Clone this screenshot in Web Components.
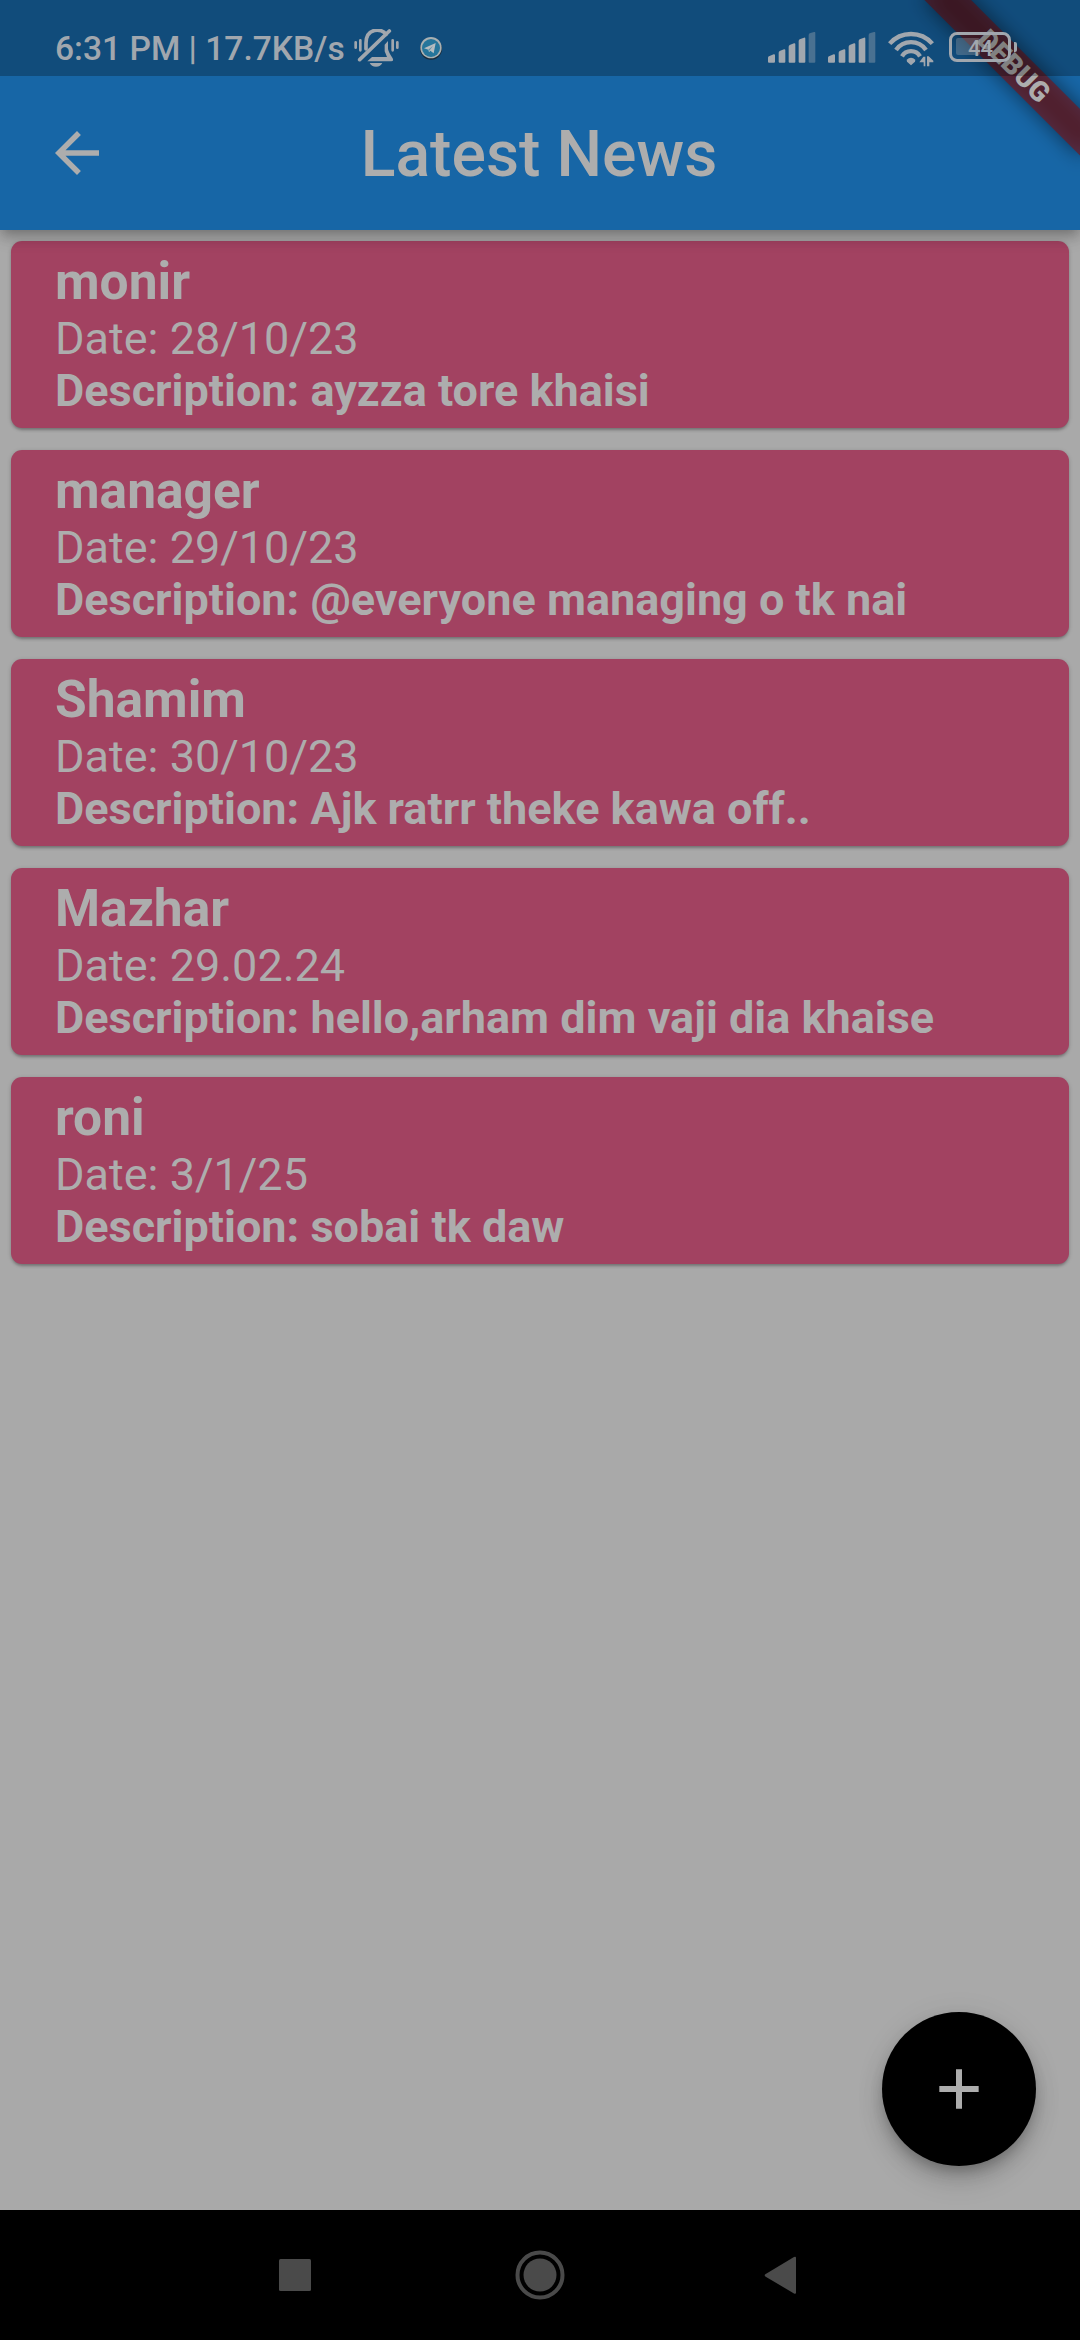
<!DOCTYPE html>
<html lang="en">
<head>
<meta charset="utf-8">
<title>Latest News</title>
<style>
  html, body { margin: 0; height: 100%; background: #a9a9a9; }
  body { font-family: Roboto, "Liberation Sans", sans-serif; color: #adadad; overflow: hidden; }
</style>
</head>
<body>
<news-screen></news-screen>
<script>
class Base extends HTMLElement {
  constructor() {
    super();
    this.attachShadow({ mode: "open" }).innerHTML = this.view();
  }
}

customElements.define("signal-bars", class extends Base {
  view() {
    return `<style>:host{display:block;width:48px;height:32px}svg{display:block}</style>
    <svg width="48" height="32" viewBox="0 0 144 96" fill="#a1a7ae">
      <path d="M0 89V77Q0 74 3 73L17 67Q21 66 21 70V89Q21 92 18 92H3Q0 92 0 89Z"/>
      <path d="M32 89V62Q32 59 35 57L48 52Q52 51 52 55V89Q52 92 49 92H35Q32 92 32 89Z"/>
      <path d="M62 89V44Q62 41 65 39L78 34Q82 33 82 37V89Q82 92 79 92H65Q62 92 62 89Z"/>
      <path d="M92 89V27Q92 24 95 22L108 17Q112 16 112 20V89Q112 92 109 92H95Q92 92 92 89Z"/>
      <path fill="#4a7191" d="M122 89V9Q122 6 125 4L138 0Q142 -1 142 3V89Q142 92 139 92H125Q122 92 122 89Z"/>
    </svg>`;
  }
});

customElements.define("wifi-icon", class extends Base {
  view() {
    return `<style>:host{display:block;width:46px;height:36px}svg{display:block}</style>
    <svg width="46" height="36" viewBox="0 0 138 108" fill="none" stroke="#a1a7ae" stroke-width="13">
      <path d="M5 38A85 85 0 0 1 133 38"/>
      <path d="M24 57A55 55 0 0 1 114 57"/>
      <path d="M42 76A31 31 0 0 1 96 76"/>
      <path fill="#a1a7ae" stroke="none" d="M56 86Q69 75 82 86L81 92L69 103L57 92Z"/>
      <path fill="#a1a7ae" stroke="none" d="M94 94L106 77H112V106H107V94ZM117 106V76H122L136 89V94H124V106Z"/>
    </svg>`;
  }
});

customElements.define("battery-icon", class extends Base {
  view() {
    return `<style>
      :host{display:flex;align-items:center;width:68px;height:30px}
      .body{box-sizing:border-box;width:62px;height:30px;border:3px solid #a1a7ae;border-radius:8px;padding:3px 4px;display:flex;font:500 22px/24px Roboto,sans-serif;color:#a1a7ae}
      .level{width:24px;height:17px;background:#a1a7ae55;border-radius:2px}
      .num{margin:-1px 0 0 -12px;width:26px;line-height:23px}
      .tip{width:2.5px;height:10px;margin-left:3px;background:#a1a7ae;border-radius:0 2px 2px 0}
    </style><div class="body"><div class="level"></div><div class="num">44</div></div><div class="tip"></div>`;
  }
});

customElements.define("bell-off-icon", class extends Base {
  view() {
    return `<style>:host{display:block;width:45px;height:38px}svg{display:block}</style>
    <svg width="45" height="38" viewBox="0 0 135 114" fill="none" stroke="#a1a7ae" stroke-width="11" stroke-linecap="round" stroke-linejoin="round">
      <path stroke-width="8" d="M5 40V56M19 34V64M116 34V64M130 40V56"/>
      <path d="M36 60V42C36 -4 84 -4 96 16"/>
      <path d="M106 6L17 92"/>
      <path stroke="none" fill="#a1a7ae" d="M40 97L54 84H99L92 67V47L102 36V60Q104 70 116 88Q120 97 112 97ZM47 102H85Q80 113 66 113T47 102Z"/>
    </svg>`;
  }
});

customElements.define("telegram-icon", class extends Base {
  view() {
    return `<style>:host{display:block;width:24px;height:24px}svg{display:block}</style>
    <svg width="24" height="24" viewBox="0 0 72 72">
      <circle cx="36" cy="38" r="33" fill="#182a38"/><circle cx="36" cy="35" r="32" fill="#a9b0b2"/>
      <circle cx="36" cy="36" r="27" fill="#25759b"/>
      <path fill="#b4bcc0" d="M15 37L50 21L44 52L34 44L30 49L28 41Z"/><path d="M28 41L42 29L31 44Z" fill="#5c8ea6"/>
    </svg>`;
  }
});

customElements.define("status-bar", class extends Base {
  view() {
    return `<style>
      :host{box-sizing:border-box;display:flex;align-items:flex-start;height:76px;padding:0 63px 0 55px;background:rgba(0,0,0,.255);color:#a1a7ae}
      .time{font:500 33.6px/40px Roboto,sans-serif;white-space:pre;padding-top:29px;width:299px}
      bell-off-icon{margin-top:29px}
      telegram-icon{margin:36px 0 0 20px}
      .right{display:flex;margin-left:auto}
      signal-bars{margin:32px 12px 0 0}
      wifi-icon{margin:31px 15px 0 0}
      battery-icon{margin-top:32px}
    </style>
    <span class="time">6:31 PM | 17.7KB/s</span><bell-off-icon></bell-off-icon><telegram-icon></telegram-icon>
    <div class="right"><signal-bars></signal-bars><signal-bars></signal-bars><wifi-icon></wifi-icon><battery-icon></battery-icon></div>`;
  }
});

customElements.define("title-bar", class extends Base {
  view() {
    return `<style>
      :host{box-sizing:border-box;display:grid;grid-template-columns:66px 1fr 66px;align-items:center;height:154px;padding:0 44px}
      svg{display:block}
      h1{margin:0;padding:2px 2px 0 0;text-align:center;font:500 64.3px/76px Roboto,sans-serif;color:#adadad}
    </style>
    <svg width="66" height="66" viewBox="0 0 24 24" fill="#adadad"><path d="M20 11H7.83l5.59-5.59L12 4l-8 8 8 8 1.41-1.41L7.83 13H20z"/></svg>
    <h1><slot></slot></h1>`;
  }
});

customElements.define("debug-banner", class extends Base {
  view() {
    return `<style>
      :host{position:absolute;top:0;right:0;width:220px;height:220px;overflow:hidden;pointer-events:none}
      .turn{position:absolute;left:220px;top:0;width:0;height:0;transform:rotate(45deg)}
      .shade,.band{position:absolute;left:-110px;top:77px;width:220px;height:33px}
      .shade{background:rgba(0,0,0,.5);filter:blur(10px)}
      .band{background:rgba(121,19,22,.63);font:900 28px/33px Roboto,sans-serif;text-align:center;color:#adadad}
    </style><div class="turn"><div class="shade"></div><div class="band">DEBUG</div></div>`;
  }
});

customElements.define("news-card", class extends Base {
  view() {
    return `<style>
      :host{box-sizing:border-box;display:flex;flex-direction:column;height:187px;padding:10px 44px;border-radius:11px;background:#a24261;box-shadow:0 3px 3px -1px rgba(0,0,0,.22),0 1px 4px rgba(0,0,0,.18);color:#adadad;white-space:nowrap}
      .name{font-weight:700;font-size:51.5px;line-height:61px}
      .date{font-size:45px;line-height:53px}
      .desc{font-weight:700;font-size:45px;line-height:52px}
    </style>
    <div class="name"><slot name="name"></slot></div>
    <div class="date">Date: <slot name="date"></slot></div>
    <div class="desc">Description: <slot></slot></div>`;
  }
});

customElements.define("add-button", class extends Base {
  view() {
    return `<style>
      :host{position:absolute;right:44px;bottom:44px;width:154px;height:154px;border-radius:50%;background:#000;display:grid;place-items:center;box-shadow:0 8px 14px -3px rgba(0,0,0,.25),0 16px 27px rgba(0,0,0,.13),0 3px 30px rgba(0,0,0,.08)}
    </style><svg width="40" height="40" viewBox="0 0 120 120" stroke="#adadad" stroke-width="18"><path d="M60 1V119M1 60H119"/></svg>`;
  }
});

customElements.define("nav-bar", class extends Base {
  view() {
    return `<style>
      :host{display:flex;height:130px;background:#000;align-items:center;justify-content:center;gap:195px}
      svg{display:block}
    </style>
    <svg width="50" height="50" viewBox="0 0 50 50" fill="#4a4a4a"><rect x="9" y="9" width="32" height="32" rx="1.5"/></svg>
    <svg width="50" height="50" viewBox="0 0 50 50" fill="#4a4a4a"><circle cx="25" cy="25" r="16.5"/><circle cx="25" cy="25" r="22.5" fill="none" stroke="#4a4a4a" stroke-width="4"/></svg>
    <svg width="50" height="50" viewBox="0 0 50 50" fill="#4a4a4a"><path d="M5.3 24.2L34 7Q36 6 36 8V42.500Q36 44.500 34 43.500L5.300 26.400Q4 25.300 5.300 24.200Z"/></svg>`;
  }
});

customElements.define("news-screen", class extends Base {
  view() {
    const news = [
      ["monir", "28/10/23", "ayzza tore khaisi"],
      ["manager", "29/10/23", "@everyone managing o tk nai"],
      ["Shamim", "30/10/23", "Ajk ratrr theke kawa off.."],
      ["Mazhar", "29.02.24", "hello,arham dim vaji dia khaise"],
      ["roni", "3/1/25", "sobai tk daw"]
    ];
    return `<style>
      :host{display:flex;flex-direction:column;width:1080px;height:2340px;background:#a9a9a9}
      header{position:relative;z-index:1;background:#1766a6;box-shadow:0 5px 11px -3px rgba(0,0,0,.22),0 10px 14px rgba(0,0,0,.12),0 3px 18px rgba(0,0,0,.07)}
      status-bar{position:relative;z-index:1}
      main{position:relative;flex:1;display:flex;flex-direction:column;gap:22px;padding:11px}
    </style>
    <header><debug-banner></debug-banner><status-bar></status-bar><title-bar>Latest News</title-bar></header>
    <main>${news.map(([n, d, t]) => `<news-card><span slot="name">${n}</span><span slot="date">${d}</span>${t}</news-card>`).join("")}
      <add-button></add-button></main>
    <nav-bar></nav-bar>`;
  }
});
</script>
</body>
</html>
